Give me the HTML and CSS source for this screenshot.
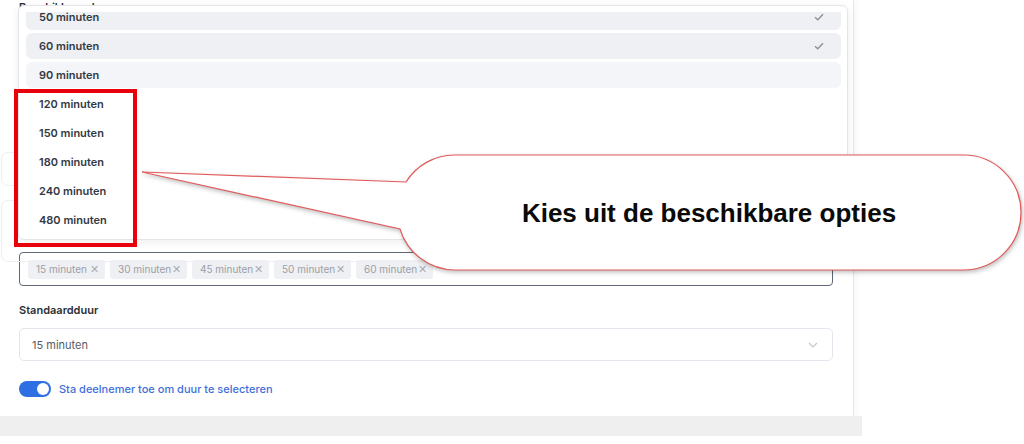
FILE: index.html
```html
<!DOCTYPE html>
<html lang="nl">
<head>
    <meta charset="UTF-8">
    <meta name="viewport" content="width=device-width, initial-scale=1.0">
    <title>Duur instellingen</title>
    <link rel="stylesheet" href="styles.css">
</head>
<body>
    <div class="page">
        <section class="panel">
            <div class="field field-durations">
                <div class="field-label">Beschikbare duur</div>
                <div class="behind">
                    <div class="ghost-card ghost-top"></div>
                    <div class="ghost-card ghost-bottom"></div>
                </div>

                <div class="multi">
                    <span class="tag">15 minuten <span class="tag-x">&#x2715;</span></span>
                    <span class="tag">30 minuten <span class="tag-x">&#x2715;</span></span>
                    <span class="tag">45 minuten <span class="tag-x">&#x2715;</span></span>
                    <span class="tag">50 minuten <span class="tag-x">&#x2715;</span></span>
                    <span class="tag">60 minuten <span class="tag-x">&#x2715;</span></span>
                </div>

                <!-- open keuzemenu, over de velden heen -->
                <div class="menu">
                    <div class="menu-scroll">
                        <ul class="options">
                            <li class="option selected">50 minuten
                                <svg class="check" width="10" height="8" viewBox="0 0 10 8"><path d="M1 4.2 L3.8 6.8 L9 1.2" fill="none" stroke="currentColor" stroke-width="1.4"/></svg>
                            </li>
                            <li class="option selected">60 minuten
                                <svg class="check" width="10" height="8" viewBox="0 0 10 8"><path d="M1 4.2 L3.8 6.8 L9 1.2" fill="none" stroke="currentColor" stroke-width="1.4"/></svg>
                            </li>
                            <li class="option active">90 minuten</li>
                            <li class="option">120 minuten</li>
                            <li class="option">150 minuten</li>
                            <li class="option">180 minuten</li>
                            <li class="option">240 minuten</li>
                            <li class="option">480 minuten</li>
                        </ul>
                    </div>
                </div>
            </div>

            <div class="field">
                <div class="field-label label-default">Standaardduur</div>
                <div class="select">
                    <span>15 minuten</span>
                    <svg class="chevron" width="10" height="6" viewBox="0 0 10 6"><path d="M1 1 L5 5 L9 1" fill="none" stroke="currentColor" stroke-width="1.2"/></svg>
                </div>
            </div>

            <label class="switch-row">
                <span class="switch"><span class="knob"></span></span>
                <span class="switch-label">Sta deelnemer toe om duur te selecteren</span>
            </label>
        </section>
        <div class="footer-bar"></div>
    </div>

    <!-- uitleg bij de opties -->
    <div class="mark-box"></div>
    <svg class="callout" width="1024" height="444" viewBox="0 0 1024 444">
        <path class="bubble" d="M142 172 L406 182 A57.5 57.5 0 0 1 455 155 H963.5 A57.5 57.5 0 0 1 963.5 270 H455 A57.5 57.5 0 0 1 400 229 Z"/>
        <text class="bubble-text" x="709" y="222" text-anchor="middle">Kies uit de beschikbare opties</text>
    </svg>
</body>
</html>
```

FILE: styles.css
```css
body {
    margin: 0;
    background-color: white;
    font-family: Inter, 'Noto Sans', sans-serif;
    color: #2d323a;
    position: relative;
    width: 1024px;
    height: 444px;
    overflow: hidden;
}
.page {
    width: 862px;
}
.panel {
    width: 814px;
    padding: 0 20px 19px 19px;
    background-color: white;
    border-right: 1px solid #e6e7ec;
    box-shadow: 3px 0 6px rgba(0, 0, 0, 0.03);
}
.field {
    display: flex;
    flex-direction: column;
}
.field-durations {
    position: relative;
}
.field-label {
    font-size: 11px;
    font-weight: 600;
    line-height: 14px;
    color: #2b2f36;
}
.behind {
    height: 238px;
    position: relative;
}
.ghost-card {
    position: absolute;
    left: -18px;
    width: 840px;
    border: 1px solid #eeeff2;
    border-radius: 7px;
}
.ghost-top {
    top: 138px;
    height: 32px;
}
.ghost-bottom {
    top: 186px;
    height: 60px;
}
.multi {
    height: 32px;
    border: 1px solid #5f6675;
    border-radius: 4px;
    display: flex;
    align-items: center;
    gap: 5px;
    padding: 0 8px;
    background-color: white;
}
.tag {
    display: flex;
    align-items: center;
    justify-content: space-between;
    width: 77px;
    height: 19px;
    box-sizing: border-box;
    padding: 0 6px 0 8px;
    background-color: #eff0f3;
    border-radius: 3px;
    font-size: 10px;
    color: #9a9ea7;
}
.tag-x {
    font-size: 11px;
    font-weight: 300;
    color: #a8acb4;
}
.menu {
    position: absolute;
    top: 5px;
    left: -1px;
    right: -15px;
    height: 235px;
    box-sizing: border-box;
    padding: 6px 6px 6px 7px;
    background-color: white;
    border: 1px solid #e3e5ea;
    border-radius: 6px;
    box-shadow: 0 2px 8px rgba(0, 0, 0, 0.07);
}
.menu-scroll {
    height: 100%;
    overflow: hidden;
}
.options {
    list-style: none;
    margin: -8px 0 0 0;
    padding: 0;
    display: flex;
    flex-direction: column;
    gap: 3px;
}
.option {
    height: 26px;
    display: flex;
    align-items: center;
    justify-content: space-between;
    padding: 0 17px 0 13px;
    border-radius: 6px;
    font-size: 11px;
    font-weight: 600;
    color: #333944;
}
.option.selected {
    background-color: #eef0f3;
}
.option.active {
    background-color: #f4f5f8;
}
.check {
    color: #8d9098;
}
.label-default {
    margin-top: 17px;
}
.select {
    margin-top: 11px;
    height: 31px;
    border: 1px solid #e4e6ee;
    border-radius: 5px;
    display: flex;
    align-items: center;
    justify-content: space-between;
    padding: 0 14px 0 12px;
    font-size: 11px;
    color: #565b64;
}
.chevron {
    color: #c4c7cd;
}
.switch-row {
    display: flex;
    align-items: center;
    gap: 8px;
    margin-top: 20px;
}
.switch {
    width: 32px;
    height: 16px;
    border-radius: 8px;
    background-color: #2f6fe4;
    display: flex;
    align-items: center;
    justify-content: flex-end;
    padding: 0 2px;
    box-sizing: border-box;
}
.knob {
    width: 12px;
    height: 12px;
    border-radius: 50%;
    background-color: white;
}
.switch-label {
    font-size: 11px;
    font-weight: 500;
    color: #3d6fda;
}
.footer-bar {
    height: 20px;
    background-color: #efefef;
}
.mark-box {
    position: absolute;
    left: 14px;
    top: 89px;
    width: 123px;
    height: 158px;
    box-sizing: border-box;
    border: 4px solid #e8000b;
}
.callout {
    position: absolute;
    left: 0;
    top: 0;
    pointer-events: none;
}
.bubble {
    fill: white;
    stroke: #e25b5b;
    stroke-width: 1.2;
    filter: drop-shadow(1px 2px 2px rgba(0, 0, 0, 0.25));
}
.bubble-text {
    font-family: 'Liberation Sans', Arial, sans-serif;
    font-weight: bold;
    font-size: 26px;
    fill: #0a0a0a;
}
```
